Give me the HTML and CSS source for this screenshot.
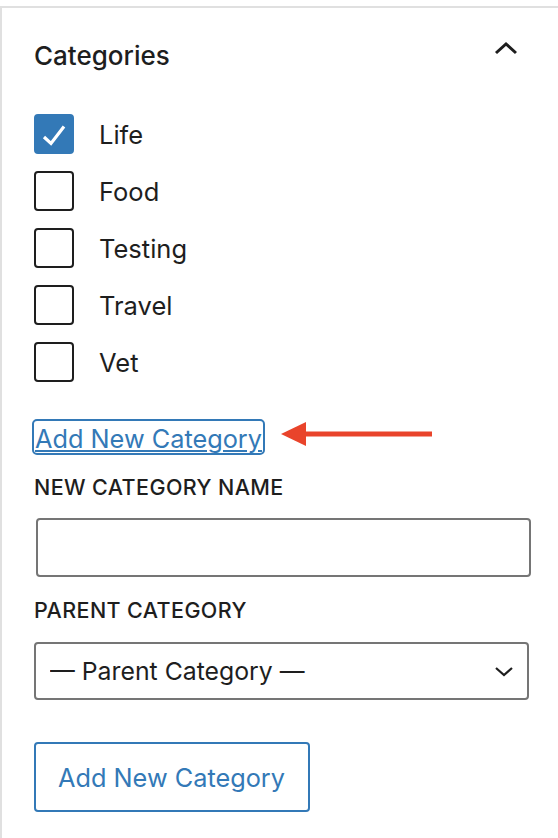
FILE: index.html
```html
<!DOCTYPE html>
<html lang="en">

<head>
    <meta charset="UTF-8">
    <meta name="viewport" content="width=device-width, initial-scale=1.0">
    <title>Categories</title>
    <link rel="stylesheet" href="styles.css">
</head>

<body>
    <div class="panel-divider"></div>

    <div class="panel">
        <div class="panel-header">
            <h2>Categories</h2>
            <svg class="toggle-icon" width="24" height="24" viewBox="0 0 24 24">
                <path d="M2 13 L12 4 L22 13" fill="none" stroke="#1e1e1e" stroke-width="3" />
            </svg>
        </div>

        <ul class="category-list">
            <li>
                <span class="checkbox checked">
                    <svg width="40" height="40" viewBox="0 0 40 40">
                        <path d="M10 23 L17 29.5 L30 12.5" fill="none" stroke="#fff" stroke-width="3.2" />
                    </svg>
                </span>
                <span class="category-name">Life</span>
            </li>
            <li><span class="checkbox"></span><span class="category-name">Food</span></li>
            <li><span class="checkbox"></span><span class="category-name">Testing</span></li>
            <li><span class="checkbox"></span><span class="category-name">Travel</span></li>
            <li><span class="checkbox"></span><span class="category-name">Vet</span></li>
        </ul>

        <div class="add-link-row">
            <a href="#" class="add-link">Add New Category</a>
            <svg class="pointer-arrow" width="154" height="26" viewBox="0 0 154 26">
                <path d="M0 13 L25 1 L25 25 Z" fill="#e9442b" />
                <rect x="20" y="10.5" width="131" height="5" fill="#e9442b" />
            </svg>
        </div>

        <form id="new-category-form">
            <label for="category-name" class="field-label">New Category Name</label>
            <input type="text" id="category-name" class="text-input">

            <label for="parent-category" class="field-label parent-label">Parent Category</label>
            <div class="select-wrap">
                <select id="parent-category" class="select-input">
                    <option value="">— Parent Category —</option>
                    <option value="life">Life</option>
                    <option value="food">Food</option>
                    <option value="testing">Testing</option>
                    <option value="travel">Travel</option>
                    <option value="vet">Vet</option>
                </select>
                <svg class="select-arrow" width="20" height="12" viewBox="0 0 20 12">
                    <path d="M2 2 L10 9 L18 2" fill="none" stroke="#1e1e1e" stroke-width="2.2" />
                </svg>
            </div>

            <button type="submit" class="add-button">Add New Category</button>
        </form>
    </div>
</body>

</html>
```

FILE: styles.css
```css
body {
    font-family: Inter, "Noto Sans", sans-serif;
    margin: 0;
    background-color: white;
    color: #1e1e1e;
}

.panel-divider {
    height: 6px;
    border-bottom: 2px solid #e0e0e0;
}

.panel {
    border-left: 2px solid #e0e0e0;
    padding: 32px 29px 30px 32px;
    min-height: 760px;
}

.panel-header {
    display: flex;
    justify-content: space-between;
    align-items: center;
}

.panel-header h2 {
    margin: 0;
    font-size: 26px;
    font-weight: 500;
    line-height: 32px;
}

.toggle-icon {
    margin-right: 11px;
    margin-top: -8px;
}

.category-list {
    list-style: none;
    margin: 42px 0 0;
    padding: 0;
    display: flex;
    flex-direction: column;
    gap: 17px;
}

.category-list li {
    display: flex;
    align-items: center;
    gap: 25px;
    height: 40px;
}

.checkbox {
    width: 40px;
    height: 40px;
    box-sizing: border-box;
    border: 2px solid #1e1e1e;
    border-radius: 4px;
    display: block;
}

.checkbox.checked {
    background-color: #3379b7;
    border-color: #3379b7;
}

.checkbox svg {
    display: block;
    margin: -2px;
}

.category-name {
    font-size: 25.5px;
}

.add-link-row {
    position: relative;
    margin-top: 37px;
    margin-left: -2px;
}

.add-link {
    display: inline-block;
    color: #3379b7;
    font-size: 25.3px;
    line-height: 29px;
    padding: 3px 1px 0;
    border: 2px solid #3379b7;
    border-radius: 5px;
}

.pointer-arrow {
    position: absolute;
    left: 249px;
    top: 2px;
}

.field-label {
    display: block;
    margin-top: 20px;
    font-size: 21.5px;
    font-weight: 500;
    line-height: 24px;
    text-transform: uppercase;
    letter-spacing: 0.4px;
}

.text-input {
    display: block;
    width: 100%;
    height: 59px;
    box-sizing: border-box;
    margin: 19px -2px 0 2px;
    border: 2px solid #757575;
    border-radius: 4px;
    font-size: 24px;
    font-family: inherit;
}

.parent-label {
    margin-top: 21px;
}

.select-wrap {
    position: relative;
    margin-top: 20px;
}

.select-input {
    display: block;
    width: 100%;
    height: 58px;
    box-sizing: border-box;
    appearance: none;
    background: white;
    border: 2px solid #757575;
    border-radius: 4px;
    padding: 0 50px 0 14px;
    font-size: 24.8px;
    font-family: inherit;
    color: #1e1e1e;
}

.select-arrow {
    position: absolute;
    right: 15px;
    top: 24px;
    pointer-events: none;
}

.add-button {
    display: block;
    margin-top: 42px;
    height: 70px;
    padding: 0 23px 0 22px;
    background-color: white;
    border: 2px solid #3379b7;
    border-radius: 4px;
    color: #3379b7;
    font-size: 25.3px;
    font-family: inherit;
    cursor: pointer;
}
```
